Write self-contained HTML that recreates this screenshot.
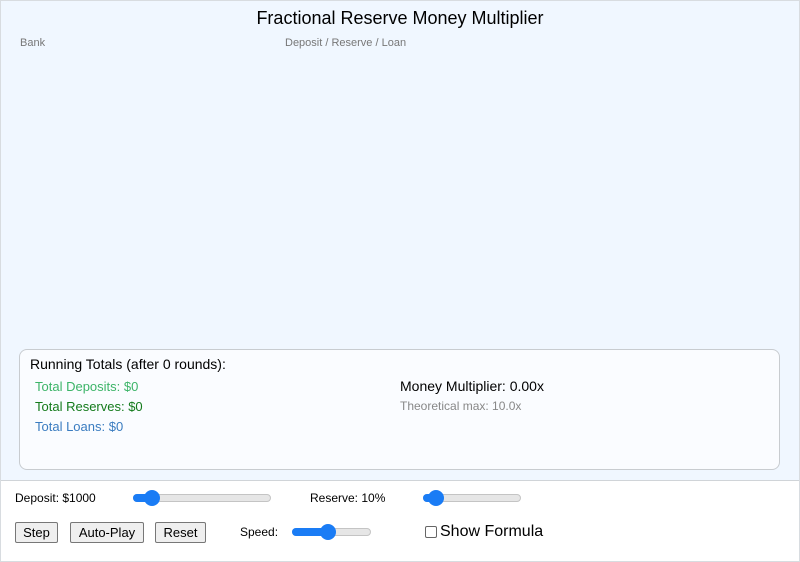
<!DOCTYPE html>
<html><head><style>
*{box-sizing:border-box;margin:0;padding:0}
body{width:800px;height:562px;font-family:"Liberation Sans",Arial,sans-serif;background:#fff;position:relative;overflow:hidden}
.top{position:absolute;left:0;top:0;width:800px;height:481px;background:#f0f7ff;border:1px solid #d8dce0;border-bottom:1px solid #d0d4d8}
.bot{position:absolute;left:0;top:480px;width:800px;height:82px;border:1px solid #d8dce0;border-top:none}
.t{position:absolute;white-space:nowrap}
.box{position:absolute;left:19px;top:349px;width:761px;height:121px;background:#fafcff;border:1px solid #c8ccd0;border-radius:8px}
.sl{position:absolute;height:8px;background:#e6e6e6;border:1px solid #c4c4c4;border-radius:4px}
.fill{position:absolute;left:-1px;top:-1px;height:8px;background:#1a7cf5;border-radius:4px}
.th{position:absolute;width:16px;height:16px;border-radius:50%;background:#1a7cf5;top:-5px}
.btn{position:absolute;top:522px;height:21px;border:1px solid #777;border-radius:2px;background:#efefef;font-size:13px;text-align:center;line-height:19px}
</style></head><body>
<div class="top"></div>
<div class="t" style="left:0;width:800px;text-align:center;top:8px;font-size:18px;color:#000">Fractional Reserve Money Multiplier</div>
<div class="t" style="left:20px;top:37px;font-size:11px;color:#777">Bank</div>
<div class="t" style="left:285px;top:37px;font-size:11px;color:#777">Deposit / Reserve / Loan</div>
<div class="box"></div>
<div class="t" style="left:30px;top:356px;font-size:14px;color:#000">Running Totals (after 0 rounds):</div>
<div class="t" style="left:35px;top:379px;font-size:13px;color:#3cb468">Total Deposits: $0</div>
<div class="t" style="left:35px;top:399px;font-size:13px;color:#137a1b">Total Reserves: $0</div>
<div class="t" style="left:35px;top:419px;font-size:13px;color:#3a7cc0">Total Loans: $0</div>
<div class="t" style="left:400px;top:378px;font-size:14px;color:#000">Money Multiplier: 0.00x</div>
<div class="t" style="left:400px;top:399px;font-size:12px;color:#888">Theoretical max: 10.0x</div>
<div class="bot"></div>
<div class="t" style="left:15px;top:491px;font-size:12px">Deposit: $1000</div>
<div class="sl" style="left:133px;top:494px;width:138px"><div class="fill" style="width:20px"></div><div class="th" style="left:10px"></div></div>
<div class="t" style="left:310px;top:491px;font-size:12px">Reserve: 10%</div>
<div class="sl" style="left:423px;top:494px;width:98px"><div class="fill" style="width:14px"></div><div class="th" style="left:4px"></div></div>
<div class="btn" style="left:15px;width:43px">Step</div>
<div class="btn" style="left:70px;width:74px">Auto-Play</div>
<div class="btn" style="left:155px;width:51px">Reset</div>
<div class="t" style="left:240px;top:525px;font-size:12px">Speed:</div>
<div class="sl" style="left:292px;top:528px;width:79px"><div class="fill" style="width:38px"></div><div class="th" style="left:27px"></div></div>
<div style="position:absolute;left:425px;top:526px;width:12px;height:12px;border:1px solid #666;border-radius:2px;background:#fff"></div>
<div class="t" style="left:440px;top:523px;font-size:16px">Show Formula</div>
</body></html>
